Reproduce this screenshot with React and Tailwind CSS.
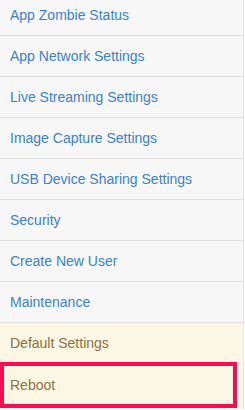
import React from "react";

const items = [
  "App Zombie Status",
  "App Network Settings",
  "Live Streaming Settings",
  "Image Capture Settings",
  "USB Device Sharing Settings",
  "Security",
  "Create New User",
  "Maintenance",
];

export default function App() {
  return (
    <div
      className="w-[245px] h-[410px] overflow-hidden bg-white relative"
      style={{ fontFamily: '"Liberation Sans", Arial, sans-serif' }}
    >
      <div className="-mt-[5px] w-[244px] flex flex-col">
        {items.map((t) => (
          <div
            key={t}
            className="h-[41px] flex items-center pl-[10px] pt-[1px] bg-[#f7f7f7] border-b border-r border-[#e2e2e2] text-[14px] text-[#3b82c6]"
          >
            {t}
          </div>
        ))}
        <div className="h-[41px] flex items-center pl-[10px] pt-[1px] bg-[#fcf7e4] border-b border-r border-[#f3eed8] text-[14px] text-[#8d7040]">
          Default Settings
        </div>
        <div className="h-[45px] flex items-center pl-[10px] pb-[2px] bg-[#fcf7e4] border-r border-[#e2e2e2] text-[14px] text-[#8d7040]">
          Reboot
        </div>
      </div>
      <div className="absolute left-0 top-[362px] w-[237px] h-[46px] border-[4px] border-[#fc0a54] pointer-events-none" />
    </div>
  );
}
